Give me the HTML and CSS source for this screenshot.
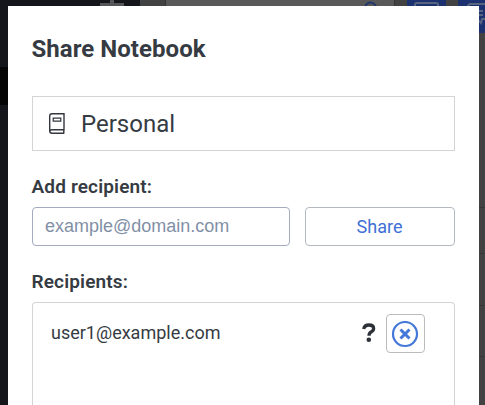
FILE: index.html
```html
<!DOCTYPE html>
<html lang="en">
<head>
<meta charset="utf-8">
<title>Share Notebook</title>
<link rel="stylesheet" href="styles.css">
</head>
<body>
<div class="app" aria-hidden="true">
  <svg class="backdrop" width="485" height="405" viewBox="0 0 485 405">
    <rect width="485" height="405" fill="#424242"/>
    <rect width="140" height="405" fill="#14161b"/>
    <rect y="67" width="8" height="38" fill="#050505"/>
    <path d="M112 0v5M100 5h24" stroke="#55565a" stroke-width="4"/>
    <rect x="166" width="228" height="8" fill="#595959"/>
    <path d="M165.500 0v8M394.500 0v8" stroke="#353535"/>
    <circle cx="370.500" cy="8" r="5.500" fill="none" stroke="#21366f" stroke-width="2"/>
    <rect x="407" width="39" height="8" fill="#1c3270"/>
    <path d="M415 8V5q0-2 2-2h19q2 0 2 2v3" fill="none" stroke="#59647f" stroke-width="2"/>
    <rect x="458" width="27" height="33" fill="#1c3270"/>
    <path d="M468 7q0-3 3-3h14M478 11h5M478 15h5M478 20l3 3 1-4 3 0" fill="none" stroke="#59647f" stroke-width="2"/>
    <path d="M479 207.500h6M479 253.500h6M479 305.500h6M479 356.500h6" stroke="#363636"/>
  </svg>
</div>
<main class="dialog" role="dialog" aria-labelledby="title">
  <h1 class="title" id="title">Share Notebook</h1>
  <div class="notebook">
    <svg class="notebook-icon" width="18" height="24" viewBox="0 0 18 24" fill="none" stroke="#32373f" stroke-width="1.400">
      <path d="M16.300 21.300H4q-2.300 0-2.300-2.500V4q0-2.300 2.300-2.300h12v16.100H4q-2.200 0-2.200 1.800M15.800 17.800v3.500"/>
      <path d="M5.200 6.200h7.600v2.900H5.200z" stroke-width="1.200"/>
    </svg>
    <span class="notebook-name">Personal</span>
  </div>
  <label class="label" for="recipient">Add recipient:</label>
  <div class="add-row">
    <input class="input" id="recipient" type="email" placeholder="example@domain.com">
    <button class="share" type="button">Share</button>
  </div>
  <h2 class="label">Recipients:</h2>
  <div class="recipients">
    <div class="recipient">
      <span class="email">user1@example.com</span>
      <svg class="status" width="14" height="20" viewBox="0 0 14 20" fill="none" stroke="#2d3138">
        <path d="M1.700 6Q2.500 2 6.900 2q4.700 0 4.700 3.400 0 2.100-2.200 3.300Q7 9.900 7 12.800" stroke-width="3.300"/>
        <circle cx="6.800" cy="16.800" r="2.300" fill="#2d3138" stroke="none"/>
      </svg>
      <button class="remove" type="button" aria-label="Remove recipient">
        <svg width="28" height="28" viewBox="0 0 28 28" fill="none" stroke="#4377d8">
          <circle cx="14" cy="14" r="12" stroke-width="2.200"/>
          <path d="M9.500 9.500l9 9M18.500 9.500l-9 9" stroke-width="3"/>
        </svg>
      </button>
    </div>
  </div>
</main>
</body>
</html>
```
FILE: styles.css
```css
* { box-sizing: border-box; }
body {
  margin: 0;
  height: 405px;
  overflow: hidden;
  position: relative;
  font-family: Roboto, sans-serif;
  color: #363b43;
}
.app { height: 405px; }
.backdrop { display: block; }
.dialog {
  position: absolute;
  top: 6px;
  left: 7.5px;
  width: 471.5px;
  height: 399px;
  padding: 28px 24.5px 0 24px;
  background: #fff;
}
.title {
  margin: 0;
  font-size: 24px;
  line-height: 30px;
  font-weight: 700;
  letter-spacing: 0.04px;
  white-space: nowrap;
}
.notebook {
  display: flex;
  align-items: center;
  height: 55px;
  margin-top: 32px;
  padding-left: 15.5px;
  border: 1.5px solid #d4d4d4;
}
.notebook-icon { margin-right: 15px; }
.notebook-name { font-size: 24px; line-height: 28px; }
.label {
  display: block;
  margin: 25px 0 0;
  font-size: 19px;
  line-height: 22px;
  font-weight: 600;
  letter-spacing: 0.15px;
}
.add-row {
  display: flex;
  gap: 15px;
  margin-top: 9px;
}
.input {
  width: 258px;
  height: 39px;
  padding: 0 12.5px;
  border: 1.5px solid #a3abbe;
  border-radius: 4px;
  background: #fff;
  font: 18px "Liberation Sans", sans-serif;
}
.input::placeholder { color: #8290a6; opacity: 1; }
.share {
  flex: 1;
  height: 39px;
  padding: 0;
  border: 1.5px solid #b4b8c1;
  border-radius: 4px;
  background: #fff;
  color: #4070d6;
  font: 18px Roboto, sans-serif;
}
.recipients {
  height: 103px;
  margin-top: 9px;
  padding: 11px 29px 0 18.5px;
  border: 1.5px solid #d4d4d4;
  border-bottom: 0;
  border-radius: 4px 4px 0 0;
}
.recipient { display: flex; align-items: center; }
.email { flex: 1; font-size: 18px; line-height: 22px; padding-bottom: 2px; }
.status { margin: 0 10px 2px 0; }
.remove {
  display: flex;
  align-items: center;
  justify-content: center;
  width: 39px;
  height: 39px;
  padding: 0;
  border: 1.5px solid #bcbcbc;
  border-radius: 4px;
  background: #fff;
}
```
